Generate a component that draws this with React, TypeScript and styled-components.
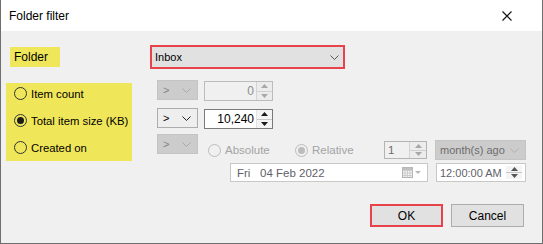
import React from 'react';
import styled, { createGlobalStyle } from 'styled-components';

const Global = createGlobalStyle`
  html, body { margin: 0; padding: 0; background: #ffffff; }
  body { font-family: "Liberation Sans", Arial, sans-serif; font-size: 11px; color: #000; }
  * { box-sizing: border-box; white-space: nowrap; }
`;

const Window = styled.div`
  width: 543px;
  height: 244px;
  border: 1px solid #6e6e6e;
  border-top: none;
  background: #f0f0f0;
  display: flex;
  flex-direction: column;
`;

const TitleBar = styled.div`
  height: 31px;
  background: #ffffff;
  display: flex;
  align-items: center;
  justify-content: space-between;
  padding-left: 8px;
  padding-right: 30px;
  font-size: 12px;
`;

const Body = styled.div`
  flex: 1;
  display: flex;
  flex-direction: column;
  padding-top: 14px;
`;

const FolderRow = styled.div`
  display: flex;
  align-items: center;
  height: 24px;
`;

const HighlightLabel = styled.div`
  background: #f0e65a;
  width: 50px;
  height: 20px;
  margin-left: 9px;
  padding-left: 4px;
  display: flex;
  align-items: center;
  font-size: 12px;
`;

const FolderCombo = styled.div`
  margin-left: 90px;
  width: 195px;
  height: 24px;
  border: 2px solid #e8434b;
  background: #e1e1e1;
  display: flex;
  align-items: center;
  justify-content: space-between;
  padding: 0 4px 0 3px;
`;

const Criteria = styled.div`
  display: flex;
  align-items: flex-start;
  margin-top: 11px;
`;

const LeftPanel = styled.div`
  margin-left: 5px;
  margin-top: 3px;
  width: 126px;
  height: 78px;
  background: #f0e65a;
  display: flex;
  flex-direction: column;
  gap: 6px;
  padding-left: 8px;
  font-size: 11.3px;
`;

const RadioRow = styled.label<{ $disabled?: boolean }>`
  height: 21px;
  display: flex;
  align-items: center;
  gap: 4px;
  color: ${p => (p.$disabled ? '#a3a3a3' : '#000')};
`;

const RadioCircle = styled.span<{ $checked?: boolean; $disabled?: boolean }>`
  width: 13px;
  height: 13px;
  border-radius: 50%;
  border: 1px solid ${p => (p.$disabled ? '#bcbcbc' : '#333333')};
  background: ${p => (p.$disabled ? '#f0f0f0' : 'transparent')};
  display: flex;
  align-items: center;
  justify-content: center;
  flex: none;
  &::after {
    content: '';
    display: ${p => (p.$checked ? 'block' : 'none')};
    width: 7px;
    height: 7px;
    border-radius: 50%;
    background: ${p => (p.$disabled ? '#bcbcbc' : '#1a1a1a')};
  }
`;

const RightPanel = styled.div`
  margin-left: 25px;
  display: flex;
  flex-direction: column;
`;

const CtrlRow = styled.div<{ $mt: number }>`
  display: flex;
  align-items: flex-start;
  margin-top: ${p => p.$mt}px;
`;

const OpCombo = styled.div<{ $disabled?: boolean }>`
  width: 41px;
  height: 20px;
  border: 1px solid ${p => (p.$disabled ? '#c4c4c4' : '#acacac')};
  background: ${p => (p.$disabled ? '#cccccc' : '#eeeeee')};
  color: ${p => (p.$disabled ? '#838383' : '#000')};
  display: flex;
  align-items: center;
  justify-content: space-between;
  padding: 0 6px 0 5px;
`;

const NumBox = styled.div<{ $disabled?: boolean }>`
  margin-left: 6px;
  margin-top: 1px;
  width: 69px;
  height: 20px;
  border: 1px solid ${p => (p.$disabled ? '#bcbcbc' : '#7a7a7a')};
  background: ${p => (p.$disabled ? '#f0f0f0' : '#ffffff')};
  color: ${p => (p.$disabled ? '#8d8d8d' : '#000')};
  display: flex;
  align-items: stretch;
  font-size: 12px;
`;

const NumValue = styled.div`
  flex: 1;
  display: flex;
  align-items: center;
  justify-content: flex-end;
  padding-right: 2px;
`;

const Spin = styled.div<{ $disabled?: boolean; $w?: number }>`
  width: ${p => p.$w ?? 16}px;
  display: flex;
  flex-direction: column;
  border-left: 1px solid ${p => (p.$disabled ? '#d4d4d4' : '#e3e3e3')};
  background: ${p => (p.$disabled ? '#ececec' : '#f4f4f4')};
`;

const SpinHalf = styled.div<{ $top?: boolean; $disabled?: boolean }>`
  flex: 1;
  display: flex;
  align-items: center;
  justify-content: center;
  border-bottom: ${p => (p.$top ? `1px solid ${p.$disabled ? '#d0d0d0' : '#c8c8c8'}` : 'none')};
`;

const DateBlock = styled.div`
  margin-top: 6px;
  display: flex;
  flex-direction: column;
`;

const DateRowA = styled.div`
  display: flex;
  align-items: center;
  height: 20px;
  margin-left: 10px;
  font-size: 11.5px;
`;

const RadioSlot = styled.div<{ $w: number }>`
  width: ${p => p.$w}px;
  display: flex;
`;

const SmallSpin = styled.div`
  width: 43px;
  height: 18px;
  border: 1px solid #b4b4b4;
  background: #f0f0f0;
  color: #6d6d6d;
  display: flex;
  align-items: stretch;
`;

const SmallValue = styled.div`
  flex: 1;
  display: flex;
  align-items: center;
  padding-left: 3px;
`;

const PeriodCombo = styled.div`
  margin-left: 8px;
  width: 91px;
  height: 20px;
  border: 1px solid #c4c4c4;
  background: #cccccc;
  color: #6d6d6d;
  display: flex;
  align-items: center;
  justify-content: space-between;
  padding: 0 6px 0 4px;
  font-size: 11px;
`;

const DateRowB = styled.div`
  display: flex;
  align-items: center;
  margin-top: 3px;
  margin-left: 32px;
`;

const DateBox = styled.div`
  width: 198px;
  height: 19px;
  border: 1px solid #c8c8c8;
  background: #ffffff;
  color: #5f5f6a;
  display: flex;
  align-items: center;
  justify-content: space-between;
  padding: 0 5px 0 6px;
  font-size: 11.5px;
`;

const DateText = styled.span`
  white-space: pre;
`;

const TimeBox = styled.div`
  margin-left: 8px;
  width: 90px;
  height: 19px;
  border: 1px solid #c8c8c8;
  background: #ffffff;
  color: #5f5f6a;
  display: flex;
  align-items: stretch;
  justify-content: space-between;
  font-size: 11px;
`;

const TimeText = styled.div`
  display: flex;
  align-items: center;
  padding-left: 3px;
`;

const TimeSpin = styled.div`
  width: 16px;
  margin: 2px 3px 2px 0;
  display: flex;
  flex-direction: column;
  background: #f4f4f4;
`;

const Footer = styled.div`
  display: flex;
  justify-content: flex-end;
  gap: 8px;
  margin-top: 22px;
  padding-right: 18px;
`;

const Button = styled.div<{ $primary?: boolean }>`
  width: 73px;
  height: 23px;
  background: #e1e1e1;
  border: ${p => (p.$primary ? '2px solid #e8434b' : '1px solid #adadad')};
  display: flex;
  align-items: center;
  justify-content: center;
  font-size: 12px;
`;

const Chevron = ({ color = '#444' }: { color?: string }) => (
  <svg width="9" height="5" viewBox="0 0 9 5">
    <path d="M0.5 0.5 L4.5 4.5 L8.5 0.5" fill="none" stroke={color} strokeWidth="1" />
  </svg>
);

const Tri = ({ up, color }: { up?: boolean; color: string }) => (
  <svg width="7" height="4" viewBox="0 0 7 4">
    <path d={up ? 'M0 4 L3.5 0 L7 4 Z' : 'M0 0 L3.5 4 L7 0 Z'} fill={color} />
  </svg>
);

const SpinButtons = ({ disabled, w }: { disabled?: boolean; w?: number }) => {
  const c = disabled ? '#a8a8a8' : '#1a1a1a';
  return (
    <Spin $disabled={disabled} $w={w}>
      <SpinHalf $top $disabled={disabled}><Tri up color={c} /></SpinHalf>
      <SpinHalf><Tri color={c} /></SpinHalf>
    </Spin>
  );
};

const CloseIcon = () => (
  <svg width="10" height="10" viewBox="0 0 10 10">
    <path d="M0.5 0.5 L9.5 9.5 M9.5 0.5 L0.5 9.5" stroke="#111" strokeWidth="1.1" />
  </svg>
);

const CalendarIcon = () => (
  <svg width="20" height="11" viewBox="0 0 20 11">
    <rect x="0.5" y="0.5" width="10" height="10" fill="#f4f4f4" stroke="#b0b0b0" />
    <path d="M0.5 3.5 H10.5 M0.5 6 H10.5 M0.5 8.5 H10.5 M3 3.5 V10.5 M5.5 3.5 V10.5 M8 3.5 V10.5" stroke="#cdcdcd" strokeWidth="1" />
    <rect x="0.5" y="0.5" width="10" height="2.5" fill="#c0c0c0" />
    <path d="M13 4 L19 4 L16 7 Z" fill="#b8b8b8" />
  </svg>
);

export default function App() {
  return (
    <>
      <Global />
      <Window>
        <TitleBar>
          <span>Folder filter</span>
          <CloseIcon />
        </TitleBar>
        <Body>
          <FolderRow>
            <HighlightLabel>Folder</HighlightLabel>
            <FolderCombo>
              <span>Inbox</span>
              <Chevron color="#555" />
            </FolderCombo>
          </FolderRow>
          <Criteria>
            <LeftPanel>
              <RadioRow>
                <RadioCircle />
                Item count
              </RadioRow>
              <RadioRow>
                <RadioCircle $checked />
                Total item size (KB)
              </RadioRow>
              <RadioRow>
                <RadioCircle />
                Created on
              </RadioRow>
            </LeftPanel>
            <RightPanel>
              <CtrlRow $mt={0}>
                <OpCombo $disabled>
                  <span>&gt;</span>
                  <Chevron color="#a8a8a8" />
                </OpCombo>
                <NumBox $disabled>
                  <NumValue>0</NumValue>
                  <SpinButtons disabled />
                </NumBox>
              </CtrlRow>
              <CtrlRow $mt={7}>
                <OpCombo>
                  <span>&gt;</span>
                  <Chevron color="#222" />
                </OpCombo>
                <NumBox>
                  <NumValue>10,240</NumValue>
                  <SpinButtons />
                </NumBox>
              </CtrlRow>
              <CtrlRow $mt={5}>
                <OpCombo $disabled>
                  <span>&gt;</span>
                  <Chevron color="#a8a8a8" />
                </OpCombo>
                <DateBlock>
                  <DateRowA>
                    <RadioSlot $w={87}>
                      <RadioRow $disabled>
                        <RadioCircle $disabled />
                        Absolute
                      </RadioRow>
                    </RadioSlot>
                    <RadioSlot $w={89}>
                      <RadioRow $disabled>
                        <RadioCircle $disabled $checked />
                        Relative
                      </RadioRow>
                    </RadioSlot>
                    <SmallSpin>
                      <SmallValue>1</SmallValue>
                      <SpinButtons disabled w={17} />
                    </SmallSpin>
                    <PeriodCombo>
                      <span>month(s) ago</span>
                      <Chevron color="#b0b0b0" />
                    </PeriodCombo>
                  </DateRowA>
                  <DateRowB>
                    <DateBox>
                      <DateText>Fri   04 Feb 2022</DateText>
                      <CalendarIcon />
                    </DateBox>
                    <TimeBox>
                      <TimeText>12:00:00 AM</TimeText>
                      <TimeSpin>
                        <SpinHalf $top><Tri up color="#555" /></SpinHalf>
                        <SpinHalf><Tri color="#555" /></SpinHalf>
                      </TimeSpin>
                    </TimeBox>
                  </DateRowB>
                </DateBlock>
              </CtrlRow>
            </RightPanel>
          </Criteria>
          <Footer>
            <Button $primary>OK</Button>
            <Button>Cancel</Button>
          </Footer>
        </Body>
      </Window>
    </>
  );
}
